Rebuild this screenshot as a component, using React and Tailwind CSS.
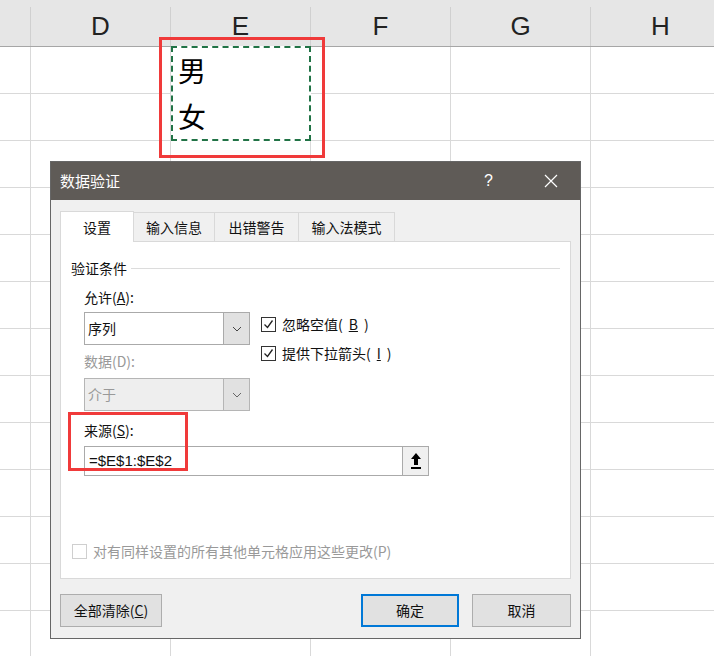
export default function App() {
  const font = { fontFamily: '"Noto Sans CJK SC","Liberation Sans",sans-serif' };
  const cols = ['D', 'E', 'F', 'G', 'H'];
  const Check = ({ on, dis }) => (
    <span className={`inline-flex w-[15px] h-[15px] border ${dis ? 'border-[#cfcfcf]' : 'border-[#333]'} bg-white items-center justify-center`}>
      {on && <svg width="11" height="11" viewBox="0 0 11 11"><path d="M1.5 5.5l3 3 5-7" fill="none" stroke="#222" strokeWidth="1.3" /></svg>}
    </span>
  );
  const Chev = ({ c }) => <svg width="10" height="6" viewBox="0 0 10 6"><path d="M1 1l4 4 4-4" fill="none" stroke={c} strokeWidth="1" /></svg>;
  return (
    <div className="relative w-[714px] h-[656px] bg-white overflow-hidden" style={font}>
      <div className="flex h-[47px] bg-[#e6e6e6] border-b border-[#a6a6a6]">
        <div className="w-[31px] shrink-0 border-r border-[#d0d0d0] mt-[7px]" />
        {cols.map(c => (
          <div key={c} className="w-[140px] shrink-0 border-r border-[#d0d0d0] mt-[7px] flex items-center justify-center text-[26px] text-[#222]" style={{ fontFamily: '"Liberation Sans",sans-serif' }}>{c}</div>
        ))}
      </div>
      {Array.from({ length: 13 }).map((_, r) => (
        <div key={r} className="flex h-[47px] border-b border-[#d9d9d9]">
          <div className="w-[31px] shrink-0 border-r border-[#d9d9d9]" />
          {cols.map(c => <div key={c} className="w-[140px] shrink-0 border-r border-[#d9d9d9]" />)}
        </div>
      ))}
      <div className="absolute left-[171px] top-[46px] w-[140px] h-[95px] border-2 border-dashed border-[#217346] bg-white flex flex-col text-[28px] text-black pl-[5px]">
        <div className="h-[46px] leading-[44px]">男</div>
        <div className="h-[46px] leading-[44px]">女</div>
      </div>
      <div className="absolute left-[159px] top-[37px] w-[166px] h-[121px] border-[3px] border-[#f03a3a]" />

      <div className="absolute left-[50px] top-[161px] w-[531px] h-[478px] bg-[#f0f0f0] border border-[#666] flex flex-col text-[14px] text-[#111]">
        <div className="h-[38px] bg-[#5f5b57] flex items-center text-white text-[15px] pl-[9px]">
          <span className="flex-1">数据验证</span>
          <span className="w-[20px] mr-[40px] text-[16px]" style={{ fontFamily: '"Liberation Sans",sans-serif' }}>?</span>
          <svg className="mr-[22px]" width="14" height="14" viewBox="0 0 14 14"><path d="M1 1l12 12M13 1L1 13" stroke="#fff" strokeWidth="1.2" /></svg>
        </div>
        <div className="flex ml-[9px] mt-[11px] h-[30px] items-end">
          <div className="w-[74px] h-[31px] bg-white border border-[#d9d9d9] border-b-0 flex items-center justify-center relative z-10 -mb-px">设置</div>
          {['输入信息', '出错警告', '输入法模式'].map((t, i) => (
            <div key={t} className={`${['w-[81px]', 'w-[84px]', 'w-[96px]'][i]} h-[29px] bg-[#f0f0f0] border border-[#d9d9d9] border-b-0 border-l-0 flex items-center justify-center`}>{t}</div>
          ))}
        </div>
        <div className="mx-[9px] h-[338px] bg-white border border-[#d9d9d9] flex flex-col pl-[10px] pr-[10px]">
          <div className="flex items-center mt-[16px] h-[20px]">
            <span>验证条件</span>
            <div className="flex-1 h-px bg-[#dcdcdc] ml-[4px]" />
          </div>
          <div className="pl-[13px] mt-[9px]">
            <div className="h-[22px]">允许(<u>A</u>):</div>
            <div className="flex mt-[3px]">
              <div className="flex flex-col">
                <div className="w-[166px] h-[33px] border border-[#aaa] flex bg-white">
                  <span className="flex-1 flex items-center pl-[3px]">序列</span>
                  <span className="w-[26px] bg-[#e1e1e1] border-l border-[#aaa] flex items-center justify-center"><Chev c="#444" /></span>
                </div>
                <div className="h-[22px] mt-[6px] text-[#999]">数据(D):</div>
                <div className="w-[166px] h-[33px] mt-[5px] border border-[#b5b5b5] flex bg-[#eeeeee] text-[#999]">
                  <span className="flex-1 flex items-center pl-[3px]">介于</span>
                  <span className="w-[26px] bg-[#e1e1e1] border-l border-[#b5b5b5] flex items-center justify-center"><Chev c="#666" /></span>
                </div>
              </div>
              <div className="ml-[11px] mt-[4px] flex flex-col gap-[13px]">
                <div className="flex items-center gap-[6px] h-[16px]"><Check on />忽略空值(<u>B</u>)</div>
                <div className="flex items-center gap-[6px] h-[16px]"><Check on />提供下拉箭头(<u>I</u>)</div>
              </div>
            </div>
            <div className="h-[22px] mt-[9px]">来源(<u>S</u>):</div>
            <div className="w-[345px] h-[30px] mt-[4px] border border-[#aaa] bg-white flex">
              <span className="flex-1 flex items-center pl-[4px] text-[15px]" style={{ fontFamily: '"Liberation Sans",sans-serif' }}>=$E$1:$E$2</span>
              <span className="w-[26px] bg-[#f0f0f0] border-l border-[#aaa] flex items-center justify-center">
                <svg width="12" height="18" viewBox="0 0 12 18"><path d="M6 1L1 7h3v6h4V7h3z" fill="#000" /><rect x="1" y="15" width="10" height="2" fill="#000" /></svg>
              </span>
            </div>
          </div>
          <div className="flex-1" />
          <div className="flex items-center gap-[6px] text-[#999] mb-[16px] pl-[1px]"><Check dis />对有同样设置的所有其他单元格应用这些更改(P)</div>
        </div>
        <div className="flex mx-[9px] mt-[15px]">
          <div className="w-[102px] h-[33px] bg-[#e1e1e1] border border-[#adadad] flex items-center justify-center">全部清除(<u>C</u>)</div>
          <div className="flex-1" />
          <div className="w-[98px] h-[33px] bg-[#e1e1e1] border-2 border-[#0078d7] flex items-center justify-center">确定</div>
          <div className="w-[99px] h-[33px] ml-[13px] bg-[#e1e1e1] border border-[#adadad] flex items-center justify-center">取消</div>
        </div>
      </div>
      <div className="absolute left-[68px] top-[412px] w-[120px] h-[59px] border-[3px] border-[#f03a3a]" />
    </div>
  );
}
